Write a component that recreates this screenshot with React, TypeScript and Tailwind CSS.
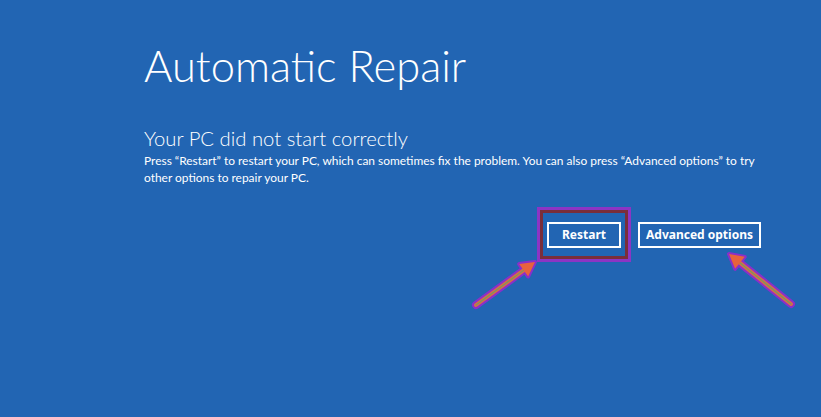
import React from 'react';

const Arrow = ({ x1, y1, x2, y2 }: { x1: number; y1: number; x2: number; y2: number }) => {
  const a = Math.atan2(y2 - y1, x2 - x1);
  const len = 16;
  const w = 0.5;
  const p1 = [x2 - len * Math.cos(a - w), y2 - len * Math.sin(a - w)];
  const p2 = [x2 - len * Math.cos(a + w), y2 - len * Math.sin(a + w)];
  const head = `${x2},${y2} ${p1[0]},${p1[1]} ${p2[0]},${p2[1]}`;
  const bx = x2 - 10 * Math.cos(a);
  const by = y2 - 10 * Math.sin(a);
  return (
    <g strokeLinecap="round">
      <line x1={x1} y1={y1} x2={bx} y2={by} stroke="#8b2fc9" strokeWidth="8" />
      <polygon points={head} fill="#8b2fc9" stroke="#8b2fc9" strokeWidth="4" strokeLinejoin="round" />
      <line x1={x1} y1={y1} x2={bx} y2={by} stroke="#d9694a" strokeWidth="4" />
      <line x1={x1} y1={y1} x2={bx} y2={by} stroke="#7a9a5a" strokeWidth="1.2" />
      <polygon points={head} fill="#e8623d" />
    </g>
  );
};

export default function App() {
  return (
    <div className="relative w-[821px] h-[417px] overflow-hidden bg-[#2265b3] text-white font-['Lato',sans-serif]">
      <div className="pl-[144px] pt-[39px]">
        <h1 className="text-[43.5px] leading-[52px] font-light">
          Automatic Repair
        </h1>

        <h2 className="mt-[34px] text-[20.3px] leading-[26px] font-light">
          Your PC did not start correctly
        </h2>
        <p className="mt-[1px] text-[11.95px] leading-[17px] whitespace-nowrap">
          Press “Restart” to restart your PC, which can sometimes fix the problem. You can also press “Advanced options” to try
          <br />
          other options to repair your PC.
        </p>

        <div className="mt-[21px] ml-[393px] flex items-center gap-[7px]">
          <div className="border-[3px] border-[#8c35c4]">
            <div className="border-[3px] border-[#7a2e3a] px-[4px] py-[8px]">
              <button className="h-[26px] w-[74px] border-2 border-white text-[12px] font-bold font-['Noto_Sans',sans-serif]">
                Restart
              </button>
            </div>
          </div>
          <button className="h-[26px] w-[123px] border-2 border-white text-[12px] font-bold font-['Noto_Sans',sans-serif]">
            Advanced options
          </button>
        </div>
      </div>

      <svg className="absolute inset-0 pointer-events-none" width="821" height="417">
        <Arrow x1={476} y1={305} x2={535} y2={262} />
        <Arrow x1={791} y1={304} x2={729} y2={254} />
      </svg>
    </div>
  );
}
